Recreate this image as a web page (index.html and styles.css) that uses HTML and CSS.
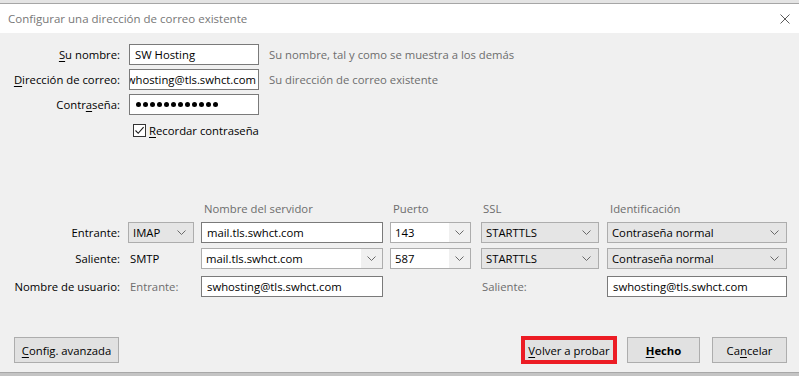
FILE: index.html
```html
<!DOCTYPE html>
<html lang="es">
<head>
<meta charset="utf-8">
<title>Configurar una dirección de correo existente</title>
<link rel="stylesheet" href="styles.css">
</head>
<body>
<div class="topband"></div>
<header class="titlebar">
  <span class="title">Configurar una dirección de correo existente</span>
  <svg class="close" width="10" height="10" viewBox="0 0 10 10"><path d="M0.5 0.5 L9.5 9.5 M9.5 0.5 L0.5 9.5" stroke="#5c5c5c" stroke-width="1" fill="none"/></svg>
</header>
<main class="content">
  <div class="identity">
    <span class="lbl"><u>S</u>u nombre:</span>
    <div class="field">SW Hosting</div>
    <span class="hint">Su nombre, tal y como se muestra a los demás</span>

    <span class="lbl"><u>D</u>irección de correo:</span>
    <div class="field field-end"><span>swhosting@tls.swhct.com</span></div>
    <span class="hint">Su dirección de correo existente</span>

    <span class="lbl">Contr<u>a</u>seña:</span>
    <div class="field dots"><i></i><i></i><i></i><i></i><i></i><i></i><i></i><i></i><i></i><i></i><i></i><i></i></div>
    <span></span>

    <span></span>
    <div class="remember">
      <span class="checkbox"><svg width="11" height="11" viewBox="0 0 11 11"><path d="M1.5 5.5 L4.2 8.3 L9.6 2.2" stroke="#1a1a1a" stroke-width="1.1" fill="none"/></svg></span>
      <span><u>R</u>ecordar contraseña</span>
    </div>
  </div>

  <div class="servers">
    <span></span><span></span>
    <span class="colhead">Nombre del servidor</span>
    <span class="colhead">Puerto</span>
    <span class="colhead">SSL</span>
    <span class="colhead">Identificación</span>

    <span class="lbl cell">Entrante:</span>
    <div class="cell"><div class="select w-imap"><span>IMAP</span><svg class="chev" width="9" height="5" viewBox="0 0 9 5"><path d="M0.5 0.5 L4.5 4.5 L8.5 0.5" stroke="#6a6a6a" fill="none"/></svg></div></div>
    <div class="cell"><div class="field w-server">mail.tls.swhct.com</div></div>
    <div class="cell"><div class="combo w-port"><span class="combo-text">143</span><span class="combo-btn"><svg class="chev" width="9" height="5" viewBox="0 0 9 5"><path d="M0.5 0.5 L4.5 4.5 L8.5 0.5" stroke="#6a6a6a" fill="none"/></svg></span></div></div>
    <div class="cell"><div class="select w-ssl"><span>STARTTLS</span><svg class="chev" width="9" height="5" viewBox="0 0 9 5"><path d="M0.5 0.5 L4.5 4.5 L8.5 0.5" stroke="#6a6a6a" fill="none"/></svg></div></div>
    <div class="cell"><div class="select w-ident"><span>Contraseña normal</span><svg class="chev" width="9" height="5" viewBox="0 0 9 5"><path d="M0.5 0.5 L4.5 4.5 L8.5 0.5" stroke="#6a6a6a" fill="none"/></svg></div></div>

    <span class="lbl cell">Saliente:</span>
    <div class="cell plain">SMTP</div>
    <div class="cell"><div class="combo w-server"><span class="combo-text">mail.tls.swhct.com</span><span class="combo-btn"><svg class="chev" width="9" height="5" viewBox="0 0 9 5"><path d="M0.5 0.5 L4.5 4.5 L8.5 0.5" stroke="#6a6a6a" fill="none"/></svg></span></div></div>
    <div class="cell"><div class="combo w-port"><span class="combo-text">587</span><span class="combo-btn"><svg class="chev" width="9" height="5" viewBox="0 0 9 5"><path d="M0.5 0.5 L4.5 4.5 L8.5 0.5" stroke="#6a6a6a" fill="none"/></svg></span></div></div>
    <div class="cell"><div class="select w-ssl"><span>STARTTLS</span><svg class="chev" width="9" height="5" viewBox="0 0 9 5"><path d="M0.5 0.5 L4.5 4.5 L8.5 0.5" stroke="#6a6a6a" fill="none"/></svg></div></div>
    <div class="cell"><div class="select w-ident"><span>Contraseña normal</span><svg class="chev" width="9" height="5" viewBox="0 0 9 5"><path d="M0.5 0.5 L4.5 4.5 L8.5 0.5" stroke="#6a6a6a" fill="none"/></svg></div></div>

    <span class="lbl cell user">Nombre de usuario:</span>
    <div class="cell user sub">Entrante:</div>
    <div class="cell user"><div class="field w-server">swhosting@tls.swhct.com</div></div>
    <span class="cell user"></span>
    <div class="cell user sub">Saliente:</div>
    <div class="cell user"><div class="field w-ident">swhosting@tls.swhct.com</div></div>
  </div>

  <div class="actions">
    <button class="btn btn-adv"><u>C</u>onfig. avanzada</button>
    <button class="btn btn-retry"><u>V</u>olver a probar</button>
    <button class="btn btn-done"><b><u>H</u>echo</b></button>
    <button class="btn btn-cancel">Ca<u>n</u>celar</button>
  </div>
</main>
<div class="bottomband"></div>
</body>
</html>
```

FILE: styles.css
```css
* { box-sizing: border-box; }
html, body { margin: 0; padding: 0; }
body {
  width: 799px;
  height: 376px;
  overflow: hidden;
  background: #f0f0f0;
  font-family: "Open Sans", "Noto Sans", sans-serif;
  font-size: 11.3px;
  color: #000;
}
u { text-decoration: underline; text-underline-offset: 2px; text-decoration-thickness: 1px; }

.topband {
  height: 4px;
  background: #e4e4e4;
  border-bottom: 1px solid #a6a6a6;
}
.titlebar {
  height: 29px;
  background: #fff;
  display: flex;
  align-items: center;
  justify-content: space-between;
  padding: 0 9px 0 8px;
}
.title { color: #777; font-size: 11.5px; }
.close { display: block; }

.content {
  height: 339px;
  display: flex;
  flex-direction: column;
}

.identity {
  display: grid;
  grid-template-columns: 120px 130px 1fr;
  grid-template-rows: 21px 21px 21px 23px;
  column-gap: 9px;
  row-gap: 4px;
  padding-top: 11px;
  align-items: center;
}
.lbl { text-align: right; white-space: nowrap; }
.hint { color: #6d6d6d; padding-left: 1px; white-space: nowrap; }

.field {
  height: 21px;
  background: #fff;
  border: 1px solid #7a7a7a;
  display: flex;
  align-items: center;
  padding: 0 5px;
  white-space: nowrap;
  overflow: hidden;
}
.field-end { justify-content: flex-end; padding: 0 2px; }
.field-end span { flex: none; }
.dots { gap: 2px; padding-left: 6px; }
.dots i {
  display: block;
  width: 5px;
  height: 5px;
  border-radius: 50%;
  background: #000;
}

.remember {
  grid-column: 2 / 4;
  display: flex;
  align-items: center;
  padding-left: 4px;
  gap: 3px;
}
.checkbox {
  width: 13px;
  height: 13px;
  border: 1px solid #333;
  background: #fff;
  display: flex;
  align-items: center;
  justify-content: center;
}
.checkbox svg { display: block; }

.servers {
  margin-top: 59px;
  display: grid;
  grid-template-columns: 128px 73px 189px 90px 127px 180px;
  grid-template-rows: 16px 21px 21px 23px;
  row-gap: 5px;
}
.colhead { color: #6d6d6d; padding-left: 3px; white-space: nowrap; line-height: 16px; }
.cell { height: 21px; display: flex; align-items: center; }
.lbl.cell { justify-content: flex-end; padding-right: 8px; }
.plain { padding-left: 2px; }
.sub { color: #6d6d6d; padding-left: 2px; }
.user { align-self: end; }

.select {
  height: 21px;
  background: #e5e5e5;
  border: 1px solid #adadad;
  display: flex;
  align-items: center;
  justify-content: space-between;
  padding: 0 7px 0 4px;
  white-space: nowrap;
}
.combo {
  height: 21px;
  background: #fff;
  border: 1px solid #adadad;
  display: flex;
  align-items: stretch;
}
.combo-text { flex: 1; display: flex; align-items: center; padding-left: 4px; white-space: nowrap; }
.combo-btn {
  width: 21px;
  background: #f0f0f0;
  display: flex;
  align-items: center;
  justify-content: center;
}
.chev { display: block; }

.w-imap { width: 66px; }
.w-server { width: 182px; }
.w-port { width: 81px; }
.w-ssl { width: 118px; margin-left: 1px; }
.w-ident { width: 181px; }

.actions {
  margin-top: auto;
  padding: 0 12px 8px 14px;
  display: flex;
  align-items: center;
  height: 36px;
}
.btn {
  font: inherit;
  color: #000;
  height: 26px;
  background: #e1e1e1;
  border: 1px solid #adadad;
  padding: 0;
  margin: 0;
  white-space: nowrap;
}
.btn-adv { width: 105px; }
.btn-retry {
  margin-left: auto;
  width: 96px;
  height: 28px;
  border: 4px solid #ec1c24;
}
.btn-done { width: 73px; margin-left: 10px; }
.btn-cancel { width: 75px; margin-left: 12px; }

.bottomband {
  height: 4px;
  background: #c4c4c4;
  border-top: 1px solid #a8a8a8;
}
```
